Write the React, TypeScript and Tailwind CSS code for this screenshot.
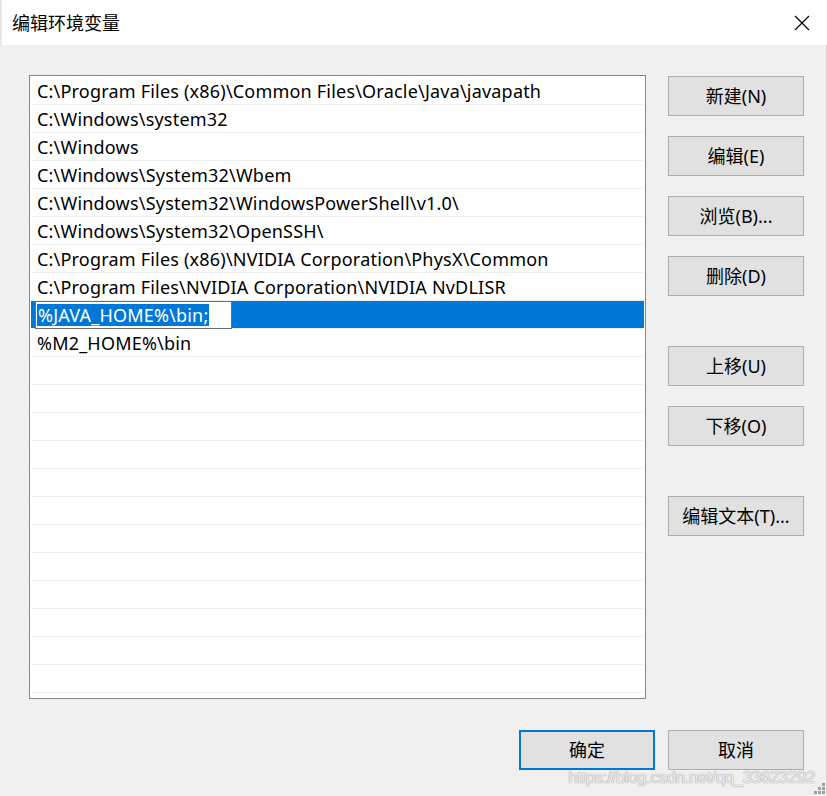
const entries = [
  "C:\\Program Files (x86)\\Common Files\\Oracle\\Java\\javapath",
  "C:\\Windows\\system32",
  "C:\\Windows",
  "C:\\Windows\\System32\\Wbem",
  "C:\\Windows\\System32\\WindowsPowerShell\\v1.0\\",
  "C:\\Windows\\System32\\OpenSSH\\",
  "C:\\Program Files (x86)\\NVIDIA Corporation\\PhysX\\Common",
  "C:\\Program Files\\NVIDIA Corporation\\NVIDIA NvDLISR",
  "%JAVA_HOME%\\bin;",
  "%M2_HOME%\\bin",
]

const EDITING = 8
const TOTAL_ROWS = 23

function Btn({ label, primary = false, className = "" }: { label: string; primary?: boolean; className?: string }) {
  return (
    <button
      className={`w-[136px] h-[40px] bg-[#e1e1e1] text-[18px] text-black flex items-center justify-center ${
        primary ? "border-2 border-[#0078d7]" : "border border-[#adadad]"
      } ${className}`}
    >
      {label}
    </button>
  )
}

export default function App() {
  const rows = Array.from({ length: TOTAL_ROWS }, (_, i) => entries[i] ?? "")

  return (
    <div
      className="w-[827px] h-[796px] bg-[#f0f0f0] relative overflow-hidden text-black"
      style={{ fontFamily: '"Microsoft YaHei UI", "Noto Sans", "Noto Sans CJK SC", sans-serif' }}
    >
      {/* 标题栏 */}
      <div className="h-[45px] bg-white flex items-center justify-between pl-[10px] pr-[17px] border-l-2 border-[#e6e6e6]">
        <span className="text-[18px] leading-none">编辑环境变量</span>
        <svg width="16" height="16" viewBox="0 0 16 16" className="text-black">
          <path d="M1 1 L15 15 M15 1 L1 15" stroke="currentColor" strokeWidth="1.2" />
        </svg>
      </div>

      {/* 列表 + 右侧按钮 */}
      <div className="flex pt-[30px] pl-[29px]">
        <div className="w-[617px] h-[624px] border border-[#828790] bg-white p-px overflow-hidden">
          {rows.map((text, i) => (
            <div
              key={i}
              className={`h-[28px] border-b border-[#f0f0f0] flex items-center text-[18px] leading-none tracking-[0.2px] whitespace-nowrap ${
                i === EDITING ? "bg-[#0078d7] pl-[4px]" : "pl-[6px]"
              }`}
            >
              {i === EDITING ? (
                <div className="w-[197px] h-[28px] bg-white border border-[#6e6e6e] flex items-center pl-px">
                  <span className="bg-[#0078d7] text-white leading-[22px] px-px">{text}</span>
                </div>
              ) : (
                text
              )}
            </div>
          ))}
        </div>

        <div className="ml-[22px] pt-px flex flex-col">
          <Btn label="新建(N)" />
          <Btn label="编辑(E)" className="mt-[20px]" />
          <Btn label="浏览(B)..." className="mt-[20px]" />
          <Btn label="删除(D)" className="mt-[20px]" />
          <Btn label="上移(U)" className="mt-[50px]" />
          <Btn label="下移(O)" className="mt-[20px]" />
          <Btn label="编辑文本(T)..." className="mt-[50px]" />
        </div>
      </div>

      {/* 底部按钮 */}
      <div className="flex justify-end gap-[13px] pr-[23px] mt-[31px]">
        <Btn label="确定" primary />
        <Btn label="取消" />
      </div>

      {/* 水印 */}
      <div
        className="absolute right-[12px] bottom-[6px] text-[17px] text-white/80 tracking-tight"
        style={{ fontFamily: '"Liberation Sans", Arial, sans-serif', textShadow: "0 0 1px #9a9a9a, 0 0 1px #9a9a9a" }}
      >
        https://blog.csdn.net/qq_33623292
      </div>

      {/* 尺寸调整手柄 */}
      <div className="absolute right-[2px] bottom-[2px] grid grid-cols-3 gap-px w-[11px] h-[11px]">
        {[0, 0, 1, 0, 1, 1, 1, 1, 1].map((v, i) => (
          <div key={i} className={v ? "bg-[#a0a0a0]" : ""} />
        ))}
      </div>

      <div className="absolute right-0 top-[45px] bottom-0 w-px bg-[#d6d6d6]" />
    </div>
  )
}
